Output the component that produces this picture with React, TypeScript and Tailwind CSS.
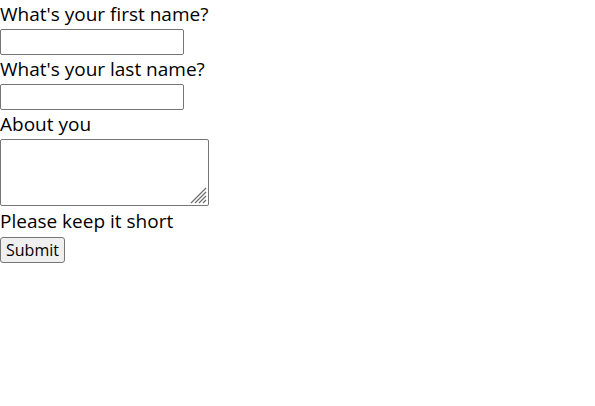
export default function App() {
  return (
    <div className="min-h-screen bg-white text-black" style={{ fontFamily: '"Open Sans", "Noto Sans", sans-serif' }}>
      <form className="flex flex-col items-start">
        <label htmlFor="first" className="text-[19px] leading-[27px] h-[29px] pt-[1px]">
          What's your first name?
        </label>
        <input
          id="first"
          type="text"
          className="w-[184px] h-[26px] rounded-[2px] border border-[#767676] bg-white"
        />
        <label htmlFor="last" className="text-[19px] leading-[27px] h-[29px] pt-[1px]">
          What's your last name?
        </label>
        <input
          id="last"
          type="text"
          className="w-[184px] h-[26px] rounded-[2px] border border-[#767676] bg-white"
        />
        <label htmlFor="about" className="text-[19px] leading-[27px] h-[29px] pt-[1px]">
          About you
        </label>
        <div className="relative">
          <textarea
            id="about"
            className="block w-[209px] h-[67px] resize-none rounded-[2px] border border-[#767676] bg-white"
          />
          <svg
            className="pointer-events-none absolute bottom-[2px] right-[2px]"
            width="18"
            height="18"
            viewBox="0 0 18 18"
          >
            <g stroke="#6f6f6f" strokeWidth="1.3">
              <line x1="2" y1="17" x2="17" y2="2" />
              <line x1="6" y1="17" x2="17" y2="6" />
              <line x1="10" y1="17" x2="17" y2="10" />
              <line x1="14" y1="17" x2="17" y2="14" />
            </g>
          </svg>
        </div>
        <p className="text-[19px] leading-[27px] h-[31px] pt-[2px]">Please keep it short</p>
        <button
          type="submit"
          className="h-[26px] w-[65px] rounded-[3px] border border-[#767676] bg-[#efefef] text-[16px] leading-none"
        >
          Submit
        </button>
      </form>
    </div>
  );
}
